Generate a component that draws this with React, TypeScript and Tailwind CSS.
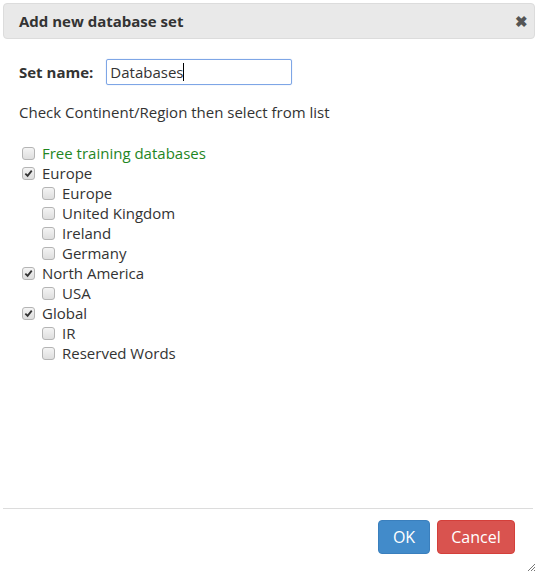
import React from 'react';

type Item = { label: string; checked?: boolean; green?: boolean; children?: string[] };

const items: Item[] = [
  { label: 'Free training databases', green: true },
  { label: 'Europe', checked: true, children: ['Europe', 'United Kingdom', 'Ireland', 'Germany'] },
  { label: 'North America', checked: true, children: ['USA'] },
  { label: 'Global', checked: true, children: ['IR', 'Reserved Words'] },
];

function Box({ checked }: { checked?: boolean }) {
  return (
    <span className="relative w-[13px] h-[13px] rounded-[3px] border border-[#b4b4b4] bg-gradient-to-b from-[#f4f4f4] to-[#dedede] flex items-center justify-center shrink-0">
      {checked && (
        <svg width="9" height="9" viewBox="0 0 10 10">
          <path d="M1.5 5.2 L4 7.6 L8.6 1.8" stroke="#333" strokeWidth="2" fill="none" />
        </svg>
      )}
    </span>
  );
}

function Row({ label, checked, green, indent }: { label: string; checked?: boolean; green?: boolean; indent?: boolean }) {
  return (
    <div className={`flex items-center h-5 gap-[7px] ${indent ? 'pl-[20px]' : ''}`}>
      <Box checked={checked} />
      <span className={green ? 'text-[#1f861f]' : 'text-[#333]'}>{label}</span>
    </div>
  );
}

export default function App() {
  return (
    <div className="w-[538px] h-[574px] bg-white relative flex flex-col text-[15px] text-[#333]" style={{ fontFamily: '"Open Sans", Arial, sans-serif' }}>
      <div className="mx-[3px] mt-[3px] h-[36px] bg-[#e9e9e9] border border-[#dcdcdc] rounded-[4px] flex items-center justify-between pl-[15px] pr-[6px]">
        <span className="font-bold text-[15px] text-[#333]">Add new database set</span>
        <span className="text-[#555] text-[15px] font-bold leading-none">✖</span>
      </div>

      <div className="flex-1 pl-[19px] pt-[20px]">
        <div className="flex items-center gap-[13px]">
          <span className="font-bold">Set name:</span>
          <div className="w-[186px] h-[26px] border border-[#7ea6e6] rounded-[2px] flex items-center px-[3px] shadow-[0_0_1px_#9ab8ec]">
            <span>Databases</span>
            <span className="w-px h-[18px] bg-black" />
          </div>
        </div>
        <div className="mt-[16px]">Check Continent/Region then select from list</div>
        <div className="mt-[20px] pl-[3px]">
          {items.map((it) => (
            <div key={it.label}>
              <Row label={it.label} checked={it.checked} green={it.green} />
              {it.children?.map((c) => (
                <Row key={c} label={c} indent />
              ))}
            </div>
          ))}
        </div>
      </div>

      <div className="mx-[3px] mr-[5px] border-t border-[#dcdcdc] h-[66px] flex items-start justify-end gap-[7px] pt-[11px] pr-[18px]">
        <button className="h-[34px] w-[52px] rounded-[4px] bg-[#428bca] border border-[#3a7fbd] text-white text-[16px]">OK</button>
        <button className="h-[34px] w-[78px] rounded-[4px] bg-[#d9534f] border border-[#d43f3a] text-white text-[16px]">Cancel</button>
      </div>

      <svg className="absolute right-[2px] bottom-[2px]" width="10" height="10" viewBox="0 0 10 10">
        <path d="M9 2 L2 9 M9 5 L5 9 M9 8 L8 9" stroke="#777" strokeWidth="1" />
      </svg>
    </div>
  );
}
